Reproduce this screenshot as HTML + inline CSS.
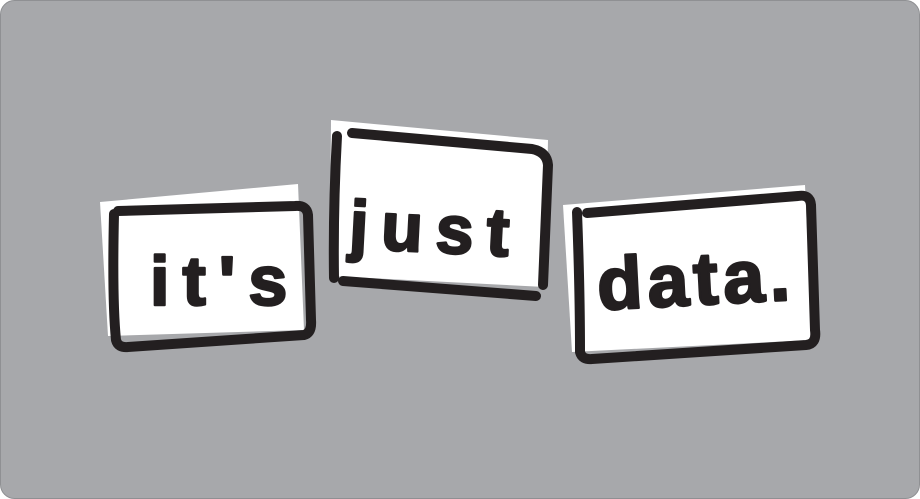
<!DOCTYPE html>
<html><head><style>
html,body{margin:0;padding:0;background:#fff;}
svg{display:block}
</style></head><body>
<svg width="920" height="499" viewBox="0 0 920 499" xmlns="http://www.w3.org/2000/svg">
<rect x="0.5" y="0.5" width="919" height="498" rx="14" fill="#a7a8ab" stroke="#8f9093"/>
<g stroke="#231f20" stroke-width="10" stroke-linecap="round" fill="none" stroke-linejoin="round">
<polygon points="100,202 298,184 304,330 108,336" fill="#fff" stroke="none"/>
<path d="M114,214 Q112,300 116,340 Q118,348 128,347 L304,335 Q312,333 311,320 L308,215 Q307,205 295,206 L118,211"/>
<polygon points="331,120 548,140 545,287 330,276" fill="#fff" stroke="none"/>
<path d="M337,136 Q333,210 334,278"/>
<path d="M352,133 L532,149 Q547,152 548,165 L543,285"/>
<path d="M343,281 L536,296"/>
<polygon points="563,205 805,185 812,340 572,352" fill="#fff" stroke="none"/>
<path d="M577,212 Q580,290 580,352 Q582,360 592,359 L806,345 Q817,344 815,330 L811,205 Q810,194 798,196 L587,213"/>
</g>
<g fill="#231f20" stroke="#231f20" stroke-width="2.5" stroke-linejoin="round" font-family="'Liberation Sans',sans-serif" font-weight="bold">
<text x="150" y="305" font-size="70" letter-spacing="13">it's</text>
<text x="350" y="252" font-size="68" letter-spacing="13" transform="rotate(3 430 220)">just</text>
<text x="597" y="305" font-size="74" letter-spacing="5" transform="rotate(-3 690 280)">data.</text>
</g>
</svg>
</body></html>
